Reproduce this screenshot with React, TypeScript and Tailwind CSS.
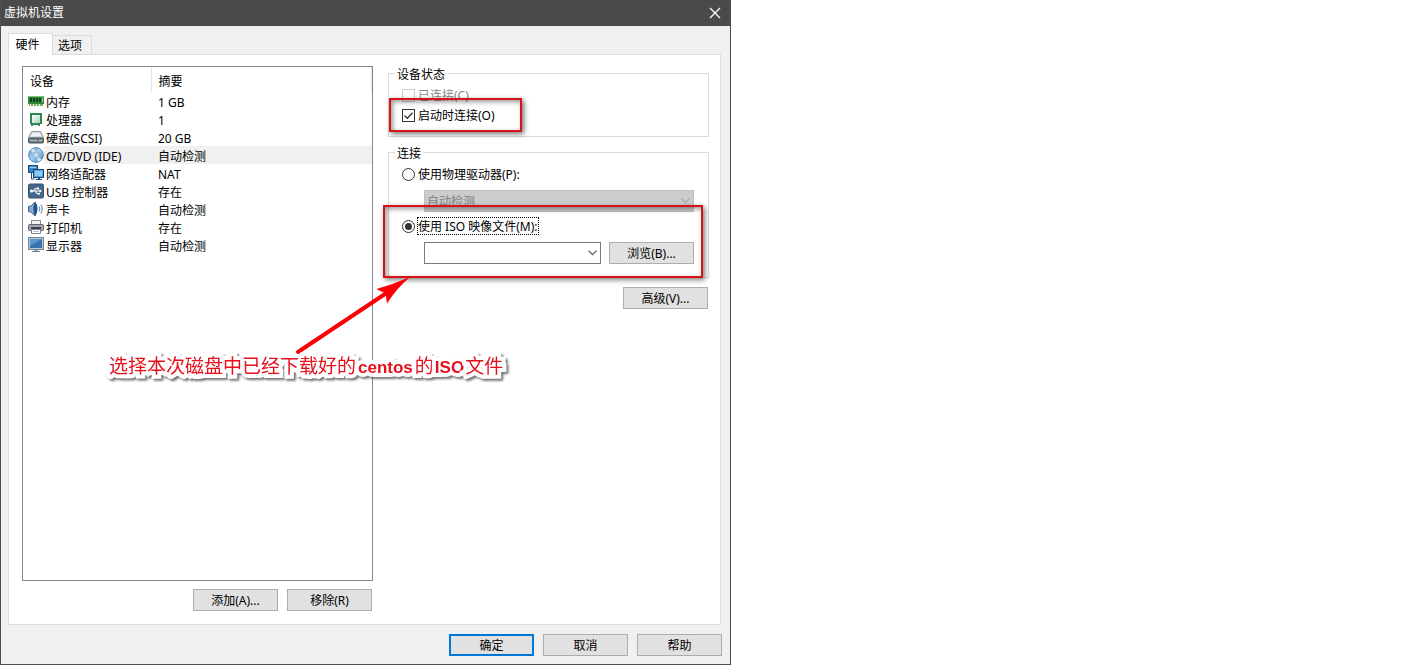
import React from "react";
import type { ReactNode } from "react";

const MemoryIcon = () => (
  <svg width="16" height="16" viewBox="0 0 16 16">
    <rect x="0" y="3" width="16" height="8" fill="#2f8a3a" />
    <rect x="0" y="3" width="16" height="1" fill="#7cc27f" />
    <path d="M2 5h2v4H2zM5 5h2v4H5zM8 5h2v4H8zM11 5h2v4h-2z" fill="#123f1a" />
    <path d="M14 5h1v4h-1z" fill="#8fd08f" />
    <path d="M1 11h14v2H1z" fill="#6fae5c" />
    <path d="M2.500 11v2M5.500 11v2M8.500 11v2M11.500 11v2" stroke="#e6f0d8" />
  </svg>
);

const ProcessorIcon = () => (
  <svg width="16" height="16" viewBox="0 0 16 16">
    <defs>
      <linearGradient id="cpu" x1="0" y1="0" x2="1" y2="1">
        <stop offset="0" stopColor="#ffffff" />
        <stop offset="1" stopColor="#a9d6b8" />
      </linearGradient>
    </defs>
    <path d="M2 2h12v11h-2v2h-2v-1H5v1H3v-2H2z" fill="#2f8554" />
    <rect x="4" y="4" width="8" height="8" fill="url(#cpu)" />
  </svg>
);

const DiskIcon = () => (
  <svg width="16" height="16" viewBox="0 0 16 16">
    <path d="M3.500 2.500h9l3 6.500H.5z" fill="#d9dde0" stroke="#8b9298" />
    <path d="M4.500 4h7l1.500 3H3z" fill="#eef0f2" />
    <rect x="0.500" y="9" width="15" height="5" rx="1" fill="#6f7a84" stroke="#4c555e" />
    <path d="M2 11.500h7" stroke="#b6bfc7" />
    <rect x="11" y="11" width="3" height="1" fill="#a5e08b" />
  </svg>
);

const DiscIcon = () => (
  <svg width="16" height="16" viewBox="0 0 16 16">
    <defs>
      <linearGradient id="disc" x1="0" y1="0" x2="1" y2="1">
        <stop offset="0" stopColor="#4f8fc4" />
        <stop offset="0.450" stopColor="#a8d0ec" />
        <stop offset="1" stopColor="#3b7fb8" />
      </linearGradient>
    </defs>
    <circle cx="8" cy="8" r="7.400" fill="url(#disc)" stroke="#5d93bd" />
    <path d="M8 8L2.500 3.500A7 7 0 0 1 6 1.400zM8 8l5.500 4.500a7 7 0 0 1-3.500 2.100z" fill="#e5f3fc" opacity="0.800" />
    <circle cx="8" cy="8" r="3" fill="#cfe4f2" stroke="#7fb0d4" />
    <circle cx="8" cy="8" r="1.200" fill="#ffffff" stroke="#5d93bd" strokeWidth="0.500" />
  </svg>
);

const NetworkIcon = () => (
  <svg width="16" height="16" viewBox="0 0 16 16">
    <rect x="0.500" y="0.500" width="9" height="7" fill="#3a86c8" stroke="#1f4f7d" />
    <path d="M2 2h6v1H2z" fill="#9ed0f5" />
    <path d="M3.500 8v6h3" fill="none" stroke="#1f4f7d" />
    <rect x="5.500" y="4.500" width="10" height="8" fill="#4ea6e8" stroke="#1d4973" />
    <rect x="7" y="6" width="7" height="5" fill="#8ccbf8" />
    <path d="M8 14.500h6" stroke="#1d4973" />
    <path d="M10 13h2v1h-2z" fill="#1d4973" />
  </svg>
);

const UsbIcon = () => (
  <svg width="16" height="16" viewBox="0 0 16 16">
    <rect x="0.500" y="1" width="15" height="14" rx="1.500" fill="#46688c" stroke="#35506e" />
    <path d="M3 8h9M5.500 8l2-2.500h2M7 8l2 2.500h2" fill="none" stroke="#fff" strokeWidth="1.200" />
    <circle cx="3.500" cy="8" r="1.500" fill="#fff" />
    <path d="M11.500 6.300v3.400L14 8z" fill="#fff" />
    <rect x="9" y="4.500" width="2" height="2" fill="#fff" />
    <circle cx="11" cy="10.800" r="1.100" fill="#fff" />
  </svg>
);

const SoundIcon = () => (
  <svg width="16" height="16" viewBox="0 0 16 16">
    <path d="M0.500 5.500Q2 5 3.500 4.500L7 1q2.500 3.500 2 7t-2 7L3.500 11.500Q1.500 11 .5 10.500z" fill="#86a9c9" stroke="#3f658a" />
    <path d="M7 1q-3 7 0 14 2.500-3 2.300-7T7 1z" fill="#1f4f86" />
    <path d="M11 5.500q1.600 2.500 0 5M12.800 3.500q3 4.500 0 9" fill="none" stroke="#5b93c9" strokeWidth="1.100" />
  </svg>
);

const PrinterIcon = () => (
  <svg width="16" height="16" viewBox="0 0 16 16">
    <rect x="3.500" y="1.500" width="9" height="5" fill="#f4f4f6" stroke="#8d8d95" />
    <rect x="0.500" y="5.500" width="15" height="6" rx="1" fill="#a3a4ad" stroke="#62636c" />
    <path d="M3 8h10v2H3z" fill="#3e3f48" />
    <path d="M3.500 10.500h9v4h-9z" fill="#fff" stroke="#7b7c85" />
    <path d="M5 12.500h6" stroke="#a9c4e0" />
  </svg>
);

const DisplayIcon = () => (
  <svg width="16" height="16" viewBox="0 0 16 16">
    <rect x="0.500" y="0.500" width="15" height="12" fill="#b9c6d2" stroke="#71859a" />
    <rect x="2" y="2" width="12" height="9" fill="#3a74ad" />
    <path d="M2 2h12L2 9z" fill="#5f96c8" />
    <path d="M6 13h4v1H6z" fill="#94a3b1" />
    <path d="M4 14.500h8" stroke="#71859a" />
  </svg>
);

const devices: { name: string; summary: string; icon: ReactNode; selected?: boolean }[] = [
  { name: "内存", summary: "1 GB", icon: <MemoryIcon /> },
  { name: "处理器", summary: "1", icon: <ProcessorIcon /> },
  { name: "硬盘(SCSI)", summary: "20 GB", icon: <DiskIcon /> },
  { name: "CD/DVD (IDE)", summary: "自动检测", icon: <DiscIcon />, selected: true },
  { name: "网络适配器", summary: "NAT", icon: <NetworkIcon /> },
  { name: "USB 控制器", summary: "存在", icon: <UsbIcon /> },
  { name: "声卡", summary: "自动检测", icon: <SoundIcon /> },
  { name: "打印机", summary: "存在", icon: <PrinterIcon /> },
  { name: "显示器", summary: "自动检测", icon: <DisplayIcon /> },
];

function DialogButton({ children, primary }: { children: ReactNode; primary?: boolean }) {
  return (
    <button
      type="button"
      className={
        primary
          ? "h-[22px] w-[85px] border-2 border-[#0078d7] bg-[#e1e1e1] pt-0.5 text-center leading-4"
          : "h-[22px] w-[85px] border border-[#adadad] bg-[#e1e1e1] pt-0.5 text-center leading-4"
      }
    >
      {children}
    </button>
  );
}

function Chevron({ className }: { className: string }) {
  return (
    <svg className={className} width="9" height="6" viewBox="0 0 9 6" fill="none" stroke="currentColor" strokeWidth="1.200">
      <path d="M0.500 0.700l4 4 4-4" />
    </svg>
  );
}

function DeviceTable() {
  return (
    <div className="flex-1 border border-[#828790] bg-white">
      <table className="w-full table-fixed border-collapse">
        <colgroup>
          <col className="w-[128px]" />
          <col />
        </colgroup>
        <thead>
          <tr className="h-[25px]">
            <th className="border-r border-[#e5e5e5] p-0 pt-1 pl-[7px] text-left font-normal">设备</th>
            <th className="border-r border-[#e5e5e5] p-0 pt-1 pl-[7px] text-left font-normal">摘要</th>
          </tr>
        </thead>
        <tbody>
          {devices.map((d) => (
            <tr key={d.name} className="h-[18px]">
              <td className="p-0">
                <div className="flex h-[18px] items-center pl-[5px]">
                  {d.icon}
                  <span
                    className={
                      d.selected
                        ? "h-[18px] flex-1 bg-[#f0f0f0] pt-0.5 pl-0.5 leading-[18px]"
                        : "h-[18px] flex-1 pt-0.5 pl-0.5 leading-[18px]"
                    }
                  >
                    {d.name}
                  </span>
                </div>
              </td>
              <td className="p-0">
                <div
                  className={
                    d.selected ? "h-[18px] bg-[#f0f0f0] pt-0.5 pl-[7px] leading-[18px]" : "h-[18px] pt-0.5 pl-[7px] leading-[18px]"
                  }
                >
                  {d.summary}
                </div>
              </td>
            </tr>
          ))}
        </tbody>
      </table>
    </div>
  );
}

function DeviceStatus() {
  return (
    <fieldset className="min-w-0 border border-[#dcdcdc] px-1.5 pt-1 pb-[11px]">
      <legend className="h-[15px] px-0.5 leading-[18px]">设备状态</legend>
      <div className="pl-[7px]">
        <label className="flex h-5 items-center gap-[3px] text-[#8a8a8a]">
          <input type="checkbox" disabled className="size-[13px] appearance-none border border-[#cccccc] bg-white" />
          <span className="pt-0.5">已连接(C)</span>
        </label>
        <label className="flex h-5 items-center gap-[3px]">
          <span className="relative flex">
            <input type="checkbox" defaultChecked className="peer size-[13px] appearance-none border border-[#333333] bg-white" />
            <svg
              className="pointer-events-none absolute inset-0 hidden peer-checked:block"
              width="13"
              height="13"
              viewBox="0 0 13 13"
              fill="none"
              stroke="#333"
              strokeWidth="1.300"
            >
              <path d="M2.500 6.500l2.800 2.800 5.200-5.600" />
            </svg>
          </span>
          <span className="pt-0.5">启动时连接(O)</span>
        </label>
      </div>
    </fieldset>
  );
}

const radioClass =
  "grid size-[13px] appearance-none place-content-center rounded-full border border-[#333333] bg-white before:size-[7px] before:rounded-full checked:before:bg-[#333333]";

function Connection() {
  return (
    <fieldset className="mt-2 min-w-0 border border-[#dcdcdc] px-1.5 pt-1 pb-[13px]">
      <legend className="h-[15px] px-0.5 leading-[18px]">连接</legend>
      <div className="pr-2 pl-[7px]">
        <label className="flex h-5 items-center gap-[3px]">
          <input type="radio" name="source" className={radioClass} />
          <span className="pt-0.5">使用物理驱动器(P):</span>
        </label>
        <div className="relative mt-1.5 ml-[22px]">
          <select
            disabled
            aria-label="使用物理驱动器"
            className="block h-[22px] w-full appearance-none border border-[#bfbfbf] bg-[#cccccc] pt-0.5 pl-0.5 text-[#838383] opacity-100"
          >
            <option>自动检测</option>
          </select>
          <Chevron className="pointer-events-none absolute top-2 right-1 text-[#a8a8a8]" />
        </div>
        <label className="mt-1 flex h-5 items-center gap-[3px]">
          <input type="radio" name="source" defaultChecked className={radioClass} />
          <span className="h-4 leading-[18px] outline outline-dotted outline-black">使用 ISO 映像文件(M):</span>
        </label>
        <div className="mt-1.5 ml-[22px] flex items-center gap-2">
          <div className="relative flex-1">
            <select
              aria-label="ISO 映像文件"
              className="block h-[22px] w-full appearance-none border border-[#7a7a7a] bg-white pl-1"
            >
              <option></option>
            </select>
            <Chevron className="pointer-events-none absolute top-2 right-1 text-[#555555]" />
          </div>
          <DialogButton>浏览(B)...</DialogButton>
        </div>
      </div>
    </fieldset>
  );
}

function Annotations() {
  return (
    <div className="pointer-events-none absolute inset-0">
      <div className="absolute top-[98px] left-[388px] h-[34px] w-[133px] border-2 border-[#d9121a] shadow-[2px_2px_5px_rgba(0,0,0,0.55),inset_2px_2px_5px_rgba(0,0,0,0.4)]" />
      <div className="absolute top-[205px] left-[382px] h-[73px] w-[320px] border-2 border-[#d9121a] shadow-[2px_2px_5px_rgba(0,0,0,0.5),inset_2px_2px_5px_rgba(0,0,0,0.4)]" />
      <svg className="absolute top-[270px] left-[289px]" width="130" height="90" viewBox="290 270 130 90">
        <path d="M298 352L388 292" stroke="#fb0007" strokeWidth="4" strokeLinecap="round" />
        <path d="M410 277Q394 284 376.500 289L385.500 293.500 387 303.500Q396 289 410 277z" fill="#fb0007" />
      </svg>
      <p className="absolute top-[352px] left-[108px] text-[19px] leading-7 whitespace-nowrap text-[#e60f1b] [-webkit-text-stroke:8px_white] [filter:drop-shadow(2px_2px_1px_rgba(0,0,0,0.55))] [paint-order:stroke_fill]">
        选择本次磁盘中已经下载好的
        <span className="mx-0.5 font-['Liberation_Sans',sans-serif] text-[17px] font-bold">centos</span>
        的
        <span className="mx-px font-['Liberation_Sans',sans-serif] text-[17px] font-bold">ISO</span>
        文件
      </p>
    </div>
  );
}

export default function App() {
  return (
    <main className="min-h-screen bg-white font-['Noto_Sans','Noto_Sans_CJK_SC',sans-serif] text-xs text-black" lang="zh-CN">
      <section className="relative flex min-h-screen w-full max-w-[731px] flex-col border border-t-0 border-[#4f4f51] bg-[#f0f0f0]">
        <header className="flex h-[26px] items-center justify-between bg-[#4a4a4a] pr-[9px] pl-[3px] text-white">
          <h1>虚拟机设置</h1>
          <button type="button" aria-label="关闭">
            <svg width="12" height="12" viewBox="0 0 12 12" stroke="#fff" strokeWidth="1.300">
              <path d="M1 1l10 10M11 1L1 11" />
            </svg>
          </button>
        </header>
        <nav className="flex items-end pt-[7px] pl-[7px]">
          <button type="button" className="relative z-10 -mb-px h-[22px] w-[45px] border border-b-0 border-[#dcdcdc] bg-white pr-1.5">
            硬件
          </button>
          <button type="button" className="h-[19px] w-[39px] border border-b-0 border-l-0 border-[#dcdcdc] pt-0.5 pr-1">
            选项
          </button>
        </nav>
        <div className="mr-[9px] ml-[7px] flex flex-1 gap-[15px] border border-[#dcdcdc] bg-white pt-[11px] pr-[11px] pb-[13px] pl-[13px]">
          <div className="flex w-[351px] flex-col">
            <DeviceTable />
            <div className="mt-2 flex justify-end gap-[9px] pr-px">
              <DialogButton>添加(A)...</DialogButton>
              <DialogButton>移除(R)</DialogButton>
            </div>
          </div>
          <div className="flex-1">
            <DeviceStatus />
            <Connection />
            <div className="mt-[9px] flex justify-end pr-px">
              <DialogButton>高级(V)...</DialogButton>
            </div>
          </div>
        </div>
        <footer className="flex justify-end gap-[9px] pt-[9px] pr-2 pb-2">
          <DialogButton primary>确定</DialogButton>
          <DialogButton>取消</DialogButton>
          <DialogButton>帮助</DialogButton>
        </footer>
        <Annotations />
      </section>
    </main>
  );
}
